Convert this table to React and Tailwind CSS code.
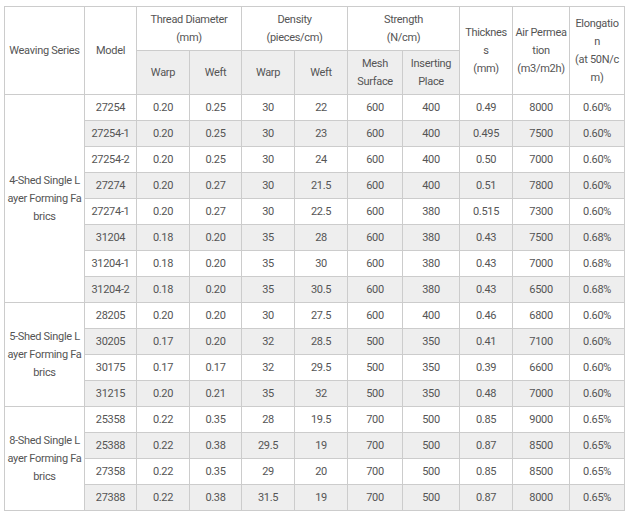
import React from "react";

const groups = [
  {
    name: ["4-Shed Single L", "ayer Forming Fa", "brics"],
    rows: [
      ["27254", "0.20", "0.25", "30", "22", "600", "400", "0.49", "8000", "0.60%"],
      ["27254-1", "0.20", "0.25", "30", "23", "600", "400", "0.495", "7500", "0.60%"],
      ["27254-2", "0.20", "0.25", "30", "24", "600", "400", "0.50", "7000", "0.60%"],
      ["27274", "0.20", "0.27", "30", "21.5", "600", "400", "0.51", "7800", "0.60%"],
      ["27274-1", "0.20", "0.27", "30", "22.5", "600", "380", "0.515", "7300", "0.60%"],
      ["31204", "0.18", "0.20", "35", "28", "600", "380", "0.43", "7500", "0.68%"],
      ["31204-1", "0.18", "0.20", "35", "30", "600", "380", "0.43", "7000", "0.68%"],
      ["31204-2", "0.18", "0.20", "35", "30.5", "600", "380", "0.43", "6500", "0.68%"],
    ],
  },
  {
    name: ["5-Shed Single L", "ayer Forming Fa", "brics"],
    rows: [
      ["28205", "0.20", "0.20", "30", "27.5", "600", "400", "0.46", "6800", "0.60%"],
      ["30205", "0.17", "0.20", "32", "28.5", "500", "350", "0.41", "7100", "0.60%"],
      ["30175", "0.17", "0.17", "32", "29.5", "500", "350", "0.39", "6600", "0.60%"],
      ["31215", "0.20", "0.21", "35", "32", "500", "350", "0.48", "7000", "0.60%"],
    ],
  },
  {
    name: ["8-Shed Single L", "ayer Forming Fa", "brics"],
    rows: [
      ["25358", "0.22", "0.35", "28", "19.5", "700", "500", "0.85", "9000", "0.65%"],
      ["25388", "0.22", "0.38", "29.5", "19", "700", "500", "0.87", "8500", "0.65%"],
      ["27358", "0.22", "0.35", "29", "20", "700", "500", "0.85", "8500", "0.65%"],
      ["27388", "0.22", "0.38", "31.5", "19", "700", "500", "0.87", "8000", "0.65%"],
    ],
  },
];

const cell = "border border-[#cccccc] p-0 text-center align-middle font-normal whitespace-nowrap overflow-hidden";

const Lines = ({ items }) =>
  items.map((t, i) => (
    <React.Fragment key={i}>
      {i > 0 && <br />}
      {t}
    </React.Fragment>
  ));

const App = () => {
  let idx = 0;
  return (
    <div className="w-[627px] h-[526px] bg-white pt-[6px] pl-[4px]" style={{ fontFamily: "Roboto, sans-serif" }}>
      <table className="border-collapse table-fixed w-[620px] text-[11px] leading-[18px] tracking-[-0.3px] text-[#555555]">
        <colgroup>
          <col className="w-[80px]" />
          <col className="w-[52px]" />
          <col className="w-[53px]" />
          <col className="w-[52px]" />
          <col className="w-[53px]" />
          <col className="w-[53px]" />
          <col className="w-[55px]" />
          <col className="w-[57px]" />
          <col className="w-[53px]" />
          <col className="w-[57px]" />
          <col className="w-[55px]" />
        </colgroup>
        <thead>
          <tr className="h-[44px]">
            <th rowSpan={2} className={cell + " bg-white"}>Weaving Series</th>
            <th rowSpan={2} className={cell + " bg-white"}>Model</th>
            <th colSpan={2} className={cell + " bg-white"}><Lines items={["Thread Diameter", "(mm)"]} /></th>
            <th colSpan={2} className={cell + " bg-white"}><Lines items={["Density", "(pieces/cm)"]} /></th>
            <th colSpan={2} className={cell + " bg-white"}><Lines items={["Strength", "(N/cm)"]} /></th>
            <th rowSpan={2} className={cell + " bg-white"}><Lines items={["Thicknes", "s", "(mm)"]} /></th>
            <th rowSpan={2} className={cell + " bg-white"}><Lines items={["Air Permea", "tion", "(m3/m2h)"]} /></th>
            <th rowSpan={2} className={cell + " bg-white"}><Lines items={["Elongatio", "n", "(at 50N/c", "m)"]} /></th>
          </tr>
          <tr className="h-[44px]">
            <th className={cell + " bg-[#eeeeee]"}>Warp</th>
            <th className={cell + " bg-[#eeeeee]"}>Weft</th>
            <th className={cell + " bg-[#eeeeee]"}>Warp</th>
            <th className={cell + " bg-[#eeeeee]"}>Weft</th>
            <th className={cell + " bg-[#eeeeee]"}><Lines items={["Mesh", "Surface"]} /></th>
            <th className={cell + " bg-[#eeeeee]"}><Lines items={["Inserting", "Place"]} /></th>
          </tr>
        </thead>
        <tbody>
          {groups.map((g) =>
            g.rows.map((r, i) => {
              const bg = idx++ % 2 === 0 ? "bg-white" : "bg-[#eeeeee]";
              return (
                <tr key={r[0]} className={"h-[26px] " + bg}>
                  {i === 0 && (
                    <td rowSpan={g.rows.length} className={cell + " bg-white"}>
                      <Lines items={g.name} />
                    </td>
                  )}
                  {r.map((v, j) => (
                    <td key={j} className={cell}>{v}</td>
                  ))}
                </tr>
              );
            })
          )}
        </tbody>
      </table>
    </div>
  );
};

export default App;
